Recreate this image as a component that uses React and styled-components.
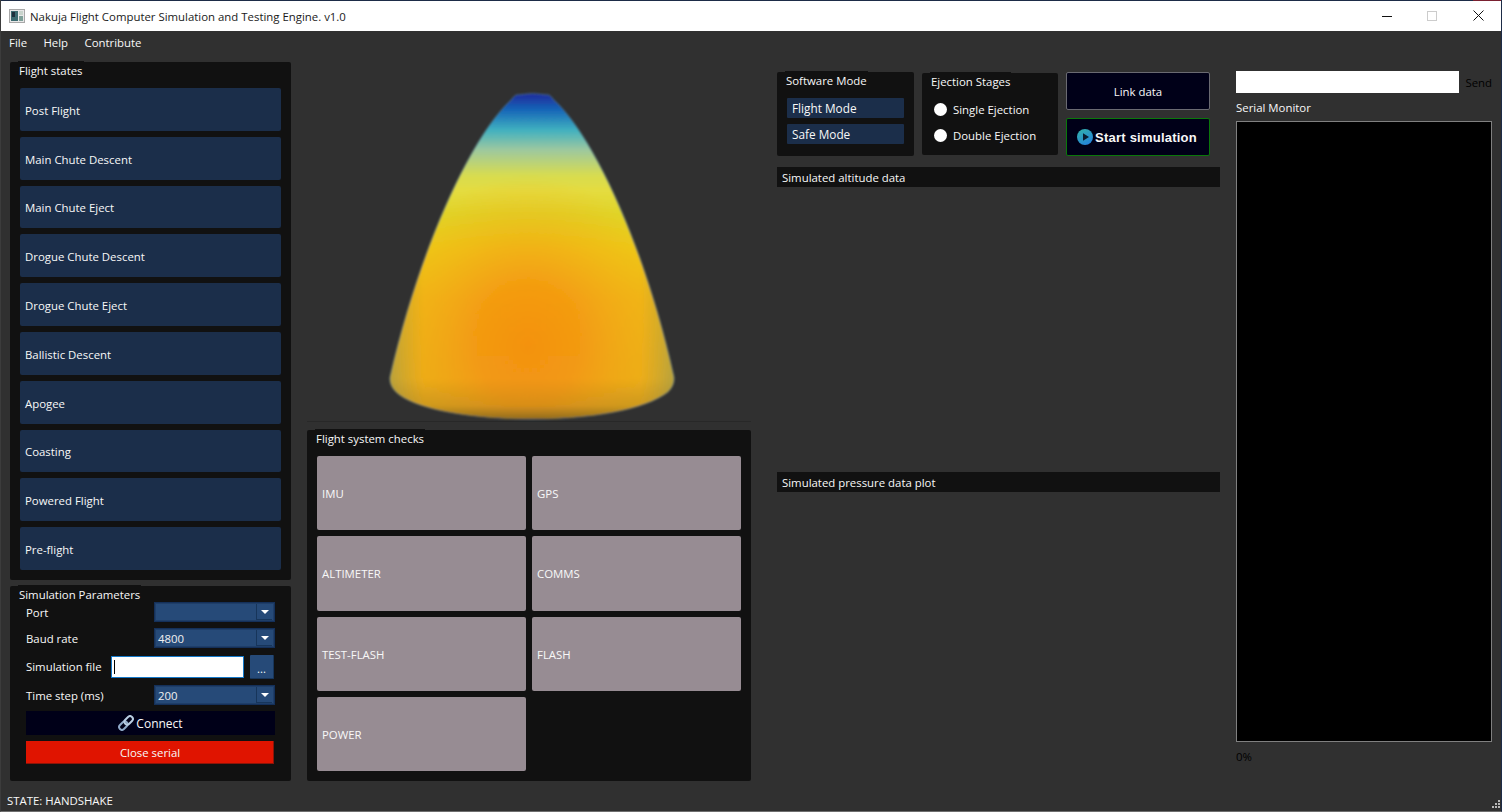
import React from "react";
import styled, { createGlobalStyle } from "styled-components";

const Global = createGlobalStyle`
  html, body { margin: 0; padding: 0; background: #303030; overflow: hidden; }
  * { box-sizing: border-box; }
  body { font-family: "Open Sans", "Noto Sans", sans-serif; font-size: 11.4px; color: #f8f8f8; }
`;

const Win = styled.div`
  width: 1502px; height: 812px; display: flex; flex-direction: column;
  background: #303030; border-left: 1px solid #3c3c3c; border-right: 1px solid #1d2c47;
  border-bottom: 1px solid #6e6e6e; overflow: hidden;
`;
const TopEdge = styled.div`
  height: 1px; flex: none; margin: 0 -1px;
  background: linear-gradient(90deg, #1d2c47 1473px, #7a2030 1473px);
`;
const TitleBar = styled.header`
  height: 30px; flex: none; background: #fff; color: #1a1a1a; display: flex; align-items: center;
  padding-left: 8px;
`;
const TitleText = styled.span` margin-left: 5px; margin-top: 1px; `;
const WinControls = styled.div` margin-left: auto; display: flex; height: 100%; `;
const WinBtn = styled.div`
  width: 45.5px; display: flex; align-items: center; justify-content: center; margin-top: -1px;
`;
const MenuBar = styled.nav`
  height: 24px; flex: none; display: flex; align-items: center; padding: 0 0 2px 8px; gap: 16.4px;
`;
const MenuItem = styled.span``;
const Body = styled.main`
  flex: 1; display: flex; padding: 7px 9px 0 9px; min-height: 0;
`;
const Col = styled.div`
  width: ${p => p.$w}px; margin-right: ${p => p.$mr || 0}px; padding-top: ${p => p.$pt || 0}px;
  display: flex; flex-direction: column; flex: none;
`;
const Panel = styled.section`
  background: #111; border-radius: 2px; height: ${p => p.$h}px; flex: none;
  width: ${p => (p.$w ? p.$w + "px" : "auto")};
  margin-top: ${p => p.$mt || 0}px;
  padding: ${p => p.$pad};
  display: flex; flex-direction: column; position: relative;
`;
const PanelTitle = styled.span`
  position: absolute; left: 8px; top: -1px; padding: 1px 1px 0;
  height: 17px; background: #111; line-height: 17px; white-space: nowrap;
`;
const StateList = styled.div` flex: 1; display: flex; flex-direction: column; gap: 6px; `;
const StateBtn = styled.div`
  flex: 1; background: #1b2e4a; border-radius: 2px; display: flex; align-items: center; padding-left: 5px;
  padding-top: 2px;
`;
const FormStack = styled.div` display: flex; flex-direction: column; gap: 6px; `;
const FormRow = styled.div`
  display: flex; align-items: center; justify-content: space-between; height: 20px;
`;
const Label = styled.span` white-space: nowrap; `;
const Combo = styled.div`
  width: 121px; height: 20px; background: #264a78; border: 1px solid #14305a; color: #f0f0f0;
  display: flex; align-items: center; padding-left: 3px; box-shadow: inset 0 0 0 1px #1f3e68;
`;
const ComboArrow = styled.span`
  margin-left: auto; width: 16px; height: 16px; margin-right: 2px; background: #264a78;
  border-left: 1px solid #17355a; border-bottom: 1px solid #17355a;
  display: flex; align-items: center; justify-content: center;
  &::after {
    content: ""; border-left: 4px solid transparent; border-right: 4px solid transparent;
    border-top: 4px solid #fff;
  }
`;
const FileLabel = styled(Label)` width: 85px; flex: none; `;
const FileInput = styled.div`
  width: 133px; height: 22px; background: #fff; border: 1px solid #1478c8; padding: 3px 2px;
  &::before { content: ""; display: block; width: 1px; height: 14px; background: #000; }
`;
const FileRow = styled.div` display: flex; align-items: center; height: 25px; `;
const BrowseBtn = styled.div`
  width: 24px; height: 24px; margin-left: 6px; background: #264a78; border-bottom: 1px solid #17355a;
  border-right: 1px solid #17355a; display: flex; justify-content: center; align-items: flex-end;
  line-height: 18px; border-radius: 1px;
`;
const ConnectBtn = styled.div`
  height: 24px; background: #000018; display: flex; align-items: center; justify-content: center; gap: 2px;
  font-size: 12px;
`;
const CloseBtn = styled.div`
  height: 23px; width: 248px; background: #e01400; border-right: 1px solid #8c1408; border-bottom: 1px solid #8c1408;
  display: flex; align-items: center; justify-content: center; padding-left: 1px;
`;
const NoseArea = styled.div`
  height: 360px; flex: none; border-bottom: 1px solid #282828; display: flex;
  svg { display: block; }
`;
const Checks = styled.div`
  flex: 1; display: grid; grid-template-columns: 209px 209px; grid-auto-rows: 74.25px; gap: 6px;
`;
const CheckTile = styled.div`
  background: #978c93; border-radius: 2px; display: flex; align-items: center; padding-left: 5px;
  padding-top: 1px;
`;
const TopRow = styled.div` display: flex; gap: 8px; align-items: flex-start; height: 84px; flex: none; `;
const ModeBtn = styled.div`
  height: 20px; background: #1b2e4a; border-radius: 1px; display: flex; align-items: center; padding-left: 5px;
  font-size: 11.8px;
`;
const ModeStack = styled.div` display: flex; flex-direction: column; gap: 6px; `;
const RadioStack = styled.div` display: flex; flex-direction: column; gap: 6px; `;
const RadioRow = styled.label` height: 20px; display: flex; align-items: center; gap: 6px; `;
const RadioDot = styled.span`
  width: 13px; height: 13px; border-radius: 50%; background: #fff; flex: none;
`;
const Actions = styled.div` display: flex; flex-direction: column; gap: 8px; width: 144px; `;
const ActionBtn = styled.div`
  height: 38px; background: #000018; border: 1px solid ${p => p.$border}; border-radius: 2px;
  display: flex; align-items: center; justify-content: center; gap: 2px; padding-right: ${p => p.$pr || 0}px;
`;
const BoldText = styled.span`
  font-family: "Liberation Sans", Arial, sans-serif; font-weight: 700; font-size: 13px; letter-spacing: 0.22px;
`;
const PlotTitle = styled.div`
  height: 20px; background: #111; display: flex; align-items: center; padding-left: 5px; flex: none;
  margin-top: ${p => p.$mt || 0}px;
`;
const PlotArea = styled.div` height: 285px; flex: none; `;
const SendRow = styled.div` display: flex; align-items: center; height: 22px; flex: none; `;
const SendInput = styled.div` width: 224px; height: 22px; background: #fff; `;
const SendLabel = styled.span` margin-left: 6px; color: #000; margin-top: 1px; `;
const MonitorLabel = styled.div` margin-top: 7px; height: 16px; line-height: 16px; `;
const Monitor = styled.div`
  margin-top: 5px; height: 621px; flex: none; background: #000; border: 1px solid #808080;
`;
const Percent = styled.div` margin-top: 7px; color: #000; height: 16px; line-height: 16px; `;
const StatusBar = styled.footer`
  height: 21px; flex: none; display: flex; align-items: center; padding-left: 6px;
`;
const Grip = styled.svg` margin-left: auto; margin-top: 6px; margin-right: 1px; `;
const MaxIcon = styled.svg` margin-right: 1px; `;

const AppIcon = () => (
  <svg width="16" height="14" viewBox="0 0 16 14">
    <rect x="0.5" y="0.5" width="15" height="13" fill="#e8e8e8" stroke="#a8a8a8" />
    <rect x="2" y="2" width="7" height="10" fill="#3c6a70" />
    <rect x="3" y="3" width="3" height="5" fill="#1e2f3c" />
    <rect x="10" y="2" width="4" height="4" fill="#c8d4cc" />
    <rect x="10" y="7" width="4" height="5" fill="#7ea098" />
  </svg>
);
const Minimize = () => (
  <svg width="10" height="10" viewBox="0 0 10 10"><path d="M0 5.5H10" stroke="#111" strokeWidth="1" /></svg>
);
const Maximize = () => (
  <MaxIcon width="10" height="10" viewBox="0 0 10 10"><rect x="0.5" y="0.5" width="9" height="9" fill="none" stroke="#ccc" /></MaxIcon>
);
const CloseX = () => (
  <svg width="11" height="11" viewBox="0 0 11 11"><path d="M0.5 0.5L10.5 10.5M10.5 0.5L0.5 10.5" stroke="#111" strokeWidth="1" /></svg>
);
const ChainIcon = () => (
  <svg width="16" height="16" viewBox="0 0 16 16">
    <g transform="rotate(-45 8 8)" fill="none" strokeWidth="2">
      <rect x="-0.5" y="5.2" width="9.5" height="5.6" rx="2.8" stroke="#8fa9c8" />
      <rect x="7" y="5.2" width="9.5" height="5.6" rx="2.8" stroke="#b9cde2" />
    </g>
  </svg>
);
const PlayIcon = () => (
  <svg width="16" height="16" viewBox="0 0 16 16">
    <defs>
      <linearGradient id="playG" x1="0" y1="0" x2="0.6" y2="1">
        <stop offset="0" stopColor="#34b4a8" />
        <stop offset="1" stopColor="#2484d8" />
      </linearGradient>
    </defs>
    <circle cx="8" cy="8" r="8" fill="url(#playG)" />
    <path d="M6 4.2L12 8L6 11.8Z" fill="#0a1c30" />
  </svg>
);
const GripIcon = () => (
  <Grip width="8" height="8" viewBox="0 0 8 8" fill="#b8b8b8">
    <rect x="6" y="0" width="2" height="2" />
    <rect x="3" y="3" width="2" height="2" />
    <rect x="6" y="3" width="2" height="2" />
    <rect x="0" y="6" width="2" height="2" />
    <rect x="3" y="6" width="2" height="2" />
    <rect x="6" y="6" width="2" height="2" />
  </Grip>
);

const NOSE = "M516,95 Q532,92 549,95 Q552,97 554,100 C597,140 647,255 674,377 Q675,385 668,392 C645,410 590,419 532,419 C474,419 415,410 396,392 Q389,385 390,377 C418,255 468,140 511,100 Q513,97 516,95 Z";

const NoseCone = () => (
  <svg width="444" height="360" viewBox="307 62 444 360">
    <defs>
      <linearGradient id="noseV" gradientUnits="userSpaceOnUse" x1="0" y1="94" x2="0" y2="420">
        <stop offset="0" stopColor="#1c2a9c" />
        <stop offset="0.05" stopColor="#1868b8" />
        <stop offset="0.11" stopColor="#40b0c0" />
        <stop offset="0.17" stopColor="#9cc8a0" />
        <stop offset="0.25" stopColor="#d8dc50" />
        <stop offset="0.295" stopColor="#e4dc40" />
        <stop offset="0.37" stopColor="#e0d428" />
        <stop offset="0.48" stopColor="#eec818" />
        <stop offset="0.63" stopColor="#f0b818" />
        <stop offset="0.88" stopColor="#eab01c" />
        <stop offset="1" stopColor="#d6a020" />
      </linearGradient>
      <radialGradient id="noseHot" gradientUnits="userSpaceOnUse" cx="0" cy="0" r="1"
        gradientTransform="translate(528 345) scale(150 170)">
        <stop offset="0" stopColor="#f58c10" stopOpacity="0.85" />
        <stop offset="0.35" stopColor="#f5920f" stopOpacity="0.75" />
        <stop offset="0.7" stopColor="#f5a00f" stopOpacity="0.32" />
        <stop offset="1" stopColor="#f5a80f" stopOpacity="0" />
      </radialGradient>
      <linearGradient id="noseBase" gradientUnits="userSpaceOnUse" x1="0" y1="378" x2="0" y2="420">
        <stop offset="0" stopColor="#806a30" stopOpacity="0" />
        <stop offset="0.65" stopColor="#806a30" stopOpacity="0.2" />
        <stop offset="1" stopColor="#605020" stopOpacity="0.7" />
      </linearGradient>
      <linearGradient id="noseEdge" gradientUnits="userSpaceOnUse" x1="390" y1="0" x2="674" y2="0">
        <stop offset="0" stopColor="#6a8c70" stopOpacity="0.4" />
        <stop offset="0.12" stopColor="#6a8c70" stopOpacity="0" />
        <stop offset="0.88" stopColor="#6a8c70" stopOpacity="0" />
        <stop offset="1" stopColor="#6a8c70" stopOpacity="0.4" />
      </linearGradient>
      <clipPath id="noseClip"><path d={NOSE} /></clipPath>
      <filter id="noseBlur" x="-5%" y="-5%" width="110%" height="110%">
        <feGaussianBlur stdDeviation="1" />
      </filter>
    </defs>
    <g filter="url(#noseBlur)">
      <path d={NOSE} fill="url(#noseV)" stroke="#5c94b0" strokeOpacity="0.5" strokeWidth="1" />
      <g clipPath="url(#noseClip)">
        <rect x="380" y="90" width="310" height="335" fill="url(#noseEdge)" />
        <rect x="380" y="90" width="310" height="335" fill="url(#noseHot)" />
        <rect x="380" y="370" width="310" height="55" fill="url(#noseBase)" />
      </g>
    </g>
  </svg>
);

const states = ["Post Flight", "Main Chute Descent", "Main Chute Eject", "Drogue Chute Descent", "Drogue Chute Eject", "Ballistic Descent", "Apogee", "Coasting", "Powered Flight", "Pre-flight"];
const checks = ["IMU", "GPS", "ALTIMETER", "COMMS", "TEST-FLASH", "FLASH", "POWER"];

export default function App() {
  return (
    <Win>
      <Global />
      <TopEdge />
      <TitleBar>
        <AppIcon />
        <TitleText>Nakuja Flight Computer Simulation and Testing Engine. v1.0</TitleText>
        <WinControls>
          <WinBtn><Minimize /></WinBtn>
          <WinBtn><Maximize /></WinBtn>
          <WinBtn><CloseX /></WinBtn>
        </WinControls>
      </TitleBar>
      <MenuBar>
        <MenuItem>File</MenuItem>
        <MenuItem>Help</MenuItem>
        <MenuItem>Contribute</MenuItem>
      </MenuBar>
      <Body>
        <Col $w={281} $mr={16}>
          <Panel $h={518} $pad="26px 10px 10px">
            <PanelTitle>Flight states</PanelTitle>
            <StateList>
              {states.map(s => <StateBtn key={s}>{s}</StateBtn>)}
            </StateList>
          </Panel>
          <Panel $h={195} $mt={6} $pad="16px 16px 0">
            <PanelTitle>Simulation Parameters</PanelTitle>
            <FormStack>
              <FormRow><Label>Port</Label><Combo><ComboArrow /></Combo></FormRow>
              <FormRow><Label>Baud rate</Label><Combo>4800<ComboArrow /></Combo></FormRow>
              <FileRow>
                <FileLabel>Simulation file</FileLabel>
                <FileInput />
                <BrowseBtn>...</BrowseBtn>
              </FileRow>
              <FormRow><Label>Time step (ms)</Label><Combo>200<ComboArrow /></Combo></FormRow>
              <ConnectBtn><ChainIcon />Connect</ConnectBtn>
              <CloseBtn>Close serial</CloseBtn>
            </FormStack>
          </Panel>
        </Col>
        <Col $w={444} $mr={26}>
          <NoseArea><NoseCone /></NoseArea>
          <Panel $h={351} $mt={8} $pad="26px 10px 10px">
            <PanelTitle>Flight system checks</PanelTitle>
            <Checks>
              {checks.map(c => <CheckTile key={c}>{c}</CheckTile>)}
            </Checks>
          </Panel>
        </Col>
        <Col $w={443} $mr={16} $pt={10}>
          <TopRow>
            <Panel $h={84} $w={137} $pad="26px 10px 0">
              <PanelTitle>Software Mode</PanelTitle>
              <ModeStack>
                <ModeBtn>Flight Mode</ModeBtn>
                <ModeBtn>Safe Mode</ModeBtn>
              </ModeStack>
            </Panel>
            <Panel $h={82} $w={136} $mt={1} $pad="26px 12px 0">
              <PanelTitle>Ejection Stages</PanelTitle>
              <RadioStack>
                <RadioRow><RadioDot />Single Ejection</RadioRow>
                <RadioRow><RadioDot />Double Ejection</RadioRow>
              </RadioStack>
            </Panel>
            <Actions>
              <ActionBtn $border="#6a6a72">Link data</ActionBtn>
              <ActionBtn $border="#0a780a" $pr={2}><PlayIcon /><BoldText>Start simulation</BoldText></ActionBtn>
            </Actions>
          </TopRow>
          <PlotTitle $mt={11}>Simulated altitude data</PlotTitle>
          <PlotArea />
          <PlotTitle>Simulated pressure data plot</PlotTitle>
        </Col>
        <Col $w={256} $pt={9}>
          <SendRow><SendInput /><SendLabel>Send</SendLabel></SendRow>
          <MonitorLabel>Serial Monitor</MonitorLabel>
          <Monitor />
          <Percent>0%</Percent>
        </Col>
      </Body>
      <StatusBar>
        STATE: HANDSHAKE
        <GripIcon />
      </StatusBar>
    </Win>
  );
}
